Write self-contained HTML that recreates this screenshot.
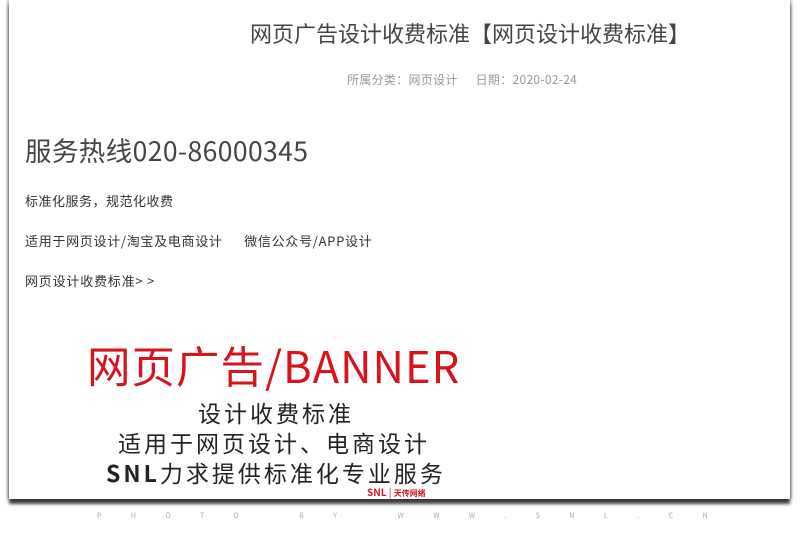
<!DOCTYPE html>
<html><head><meta charset="utf-8"><style>
body{margin:0;width:800px;height:533px;background:#fff;position:relative;overflow:hidden;font-family:"Noto Sans CJK SC","Liberation Sans",sans-serif}
.card{position:absolute;left:9px;top:0;width:781px;height:499px;background:#fff;box-shadow:-2px 0 2px rgba(0,0,0,.25),2px 0 2px rgba(0,0,0,.25),0 5px 3px rgba(0,0,0,.75)}
.t{position:absolute;white-space:nowrap;line-height:1.2}
</style></head><body>
<div class="card"></div>
<div class="t" style="left:250px;top:20px;font-size:22px;color:#444;letter-spacing:0px">网页广告设计收费标准【网页设计收费标准】</div>
<div class="t" style="left:347px;top:73px;font-size:12px;color:#999;letter-spacing:0.3px">所属分类：网页设计&nbsp;&nbsp;&nbsp;&nbsp;&nbsp;&nbsp;日期：2020-02-24</div>
<div class="t" style="left:25px;top:134px;font-size:26.5px;color:#444;letter-spacing:0.4px">服务热线020-86000345</div>
<div class="t" style="left:25px;top:193px;font-size:13px;color:#333;letter-spacing:0.5px">标准化服务，规范化收费</div>
<div class="t" style="left:25px;top:233px;font-size:13px;color:#333;letter-spacing:0.7px">适用于网页设计/淘宝及电商设计&nbsp;&nbsp;&nbsp;&nbsp;&nbsp;&nbsp;微信公众号/APP设计</div>
<div class="t" style="left:25px;top:273px;font-size:13px;color:#333;letter-spacing:0.8px">网页设计收费标准&gt;&nbsp;&gt;</div>
<div class="t" style="left:87px;top:339px;font-size:43.5px;color:#d7141e;letter-spacing:1px">网页广告/BANNER</div>
<div class="t" style="left:198px;top:399px;font-size:23px;color:#222;letter-spacing:3px">设计收费标准</div>
<div class="t" style="left:118px;top:429px;font-size:23px;color:#222;letter-spacing:3px">适用于网页设计、电商设计</div>
<div class="t" style="left:106px;top:459px;font-size:23px;color:#222;letter-spacing:3px"><b style="letter-spacing:3px">SNL</b>力求提供标准化专业服务</div>
<div class="t" style="left:367px;top:486px;font-size:10px;color:#d7141e;font-weight:bold">SNL <span style="font-weight:normal">|</span> <span style="font-size:8px">天传网络</span></div>
<div class="t" style="left:97px;top:512px;font-size:7px;color:#aaa;letter-spacing:29.5px">PHOTO BY WWW.SNL.CN</div>
</body></html>
